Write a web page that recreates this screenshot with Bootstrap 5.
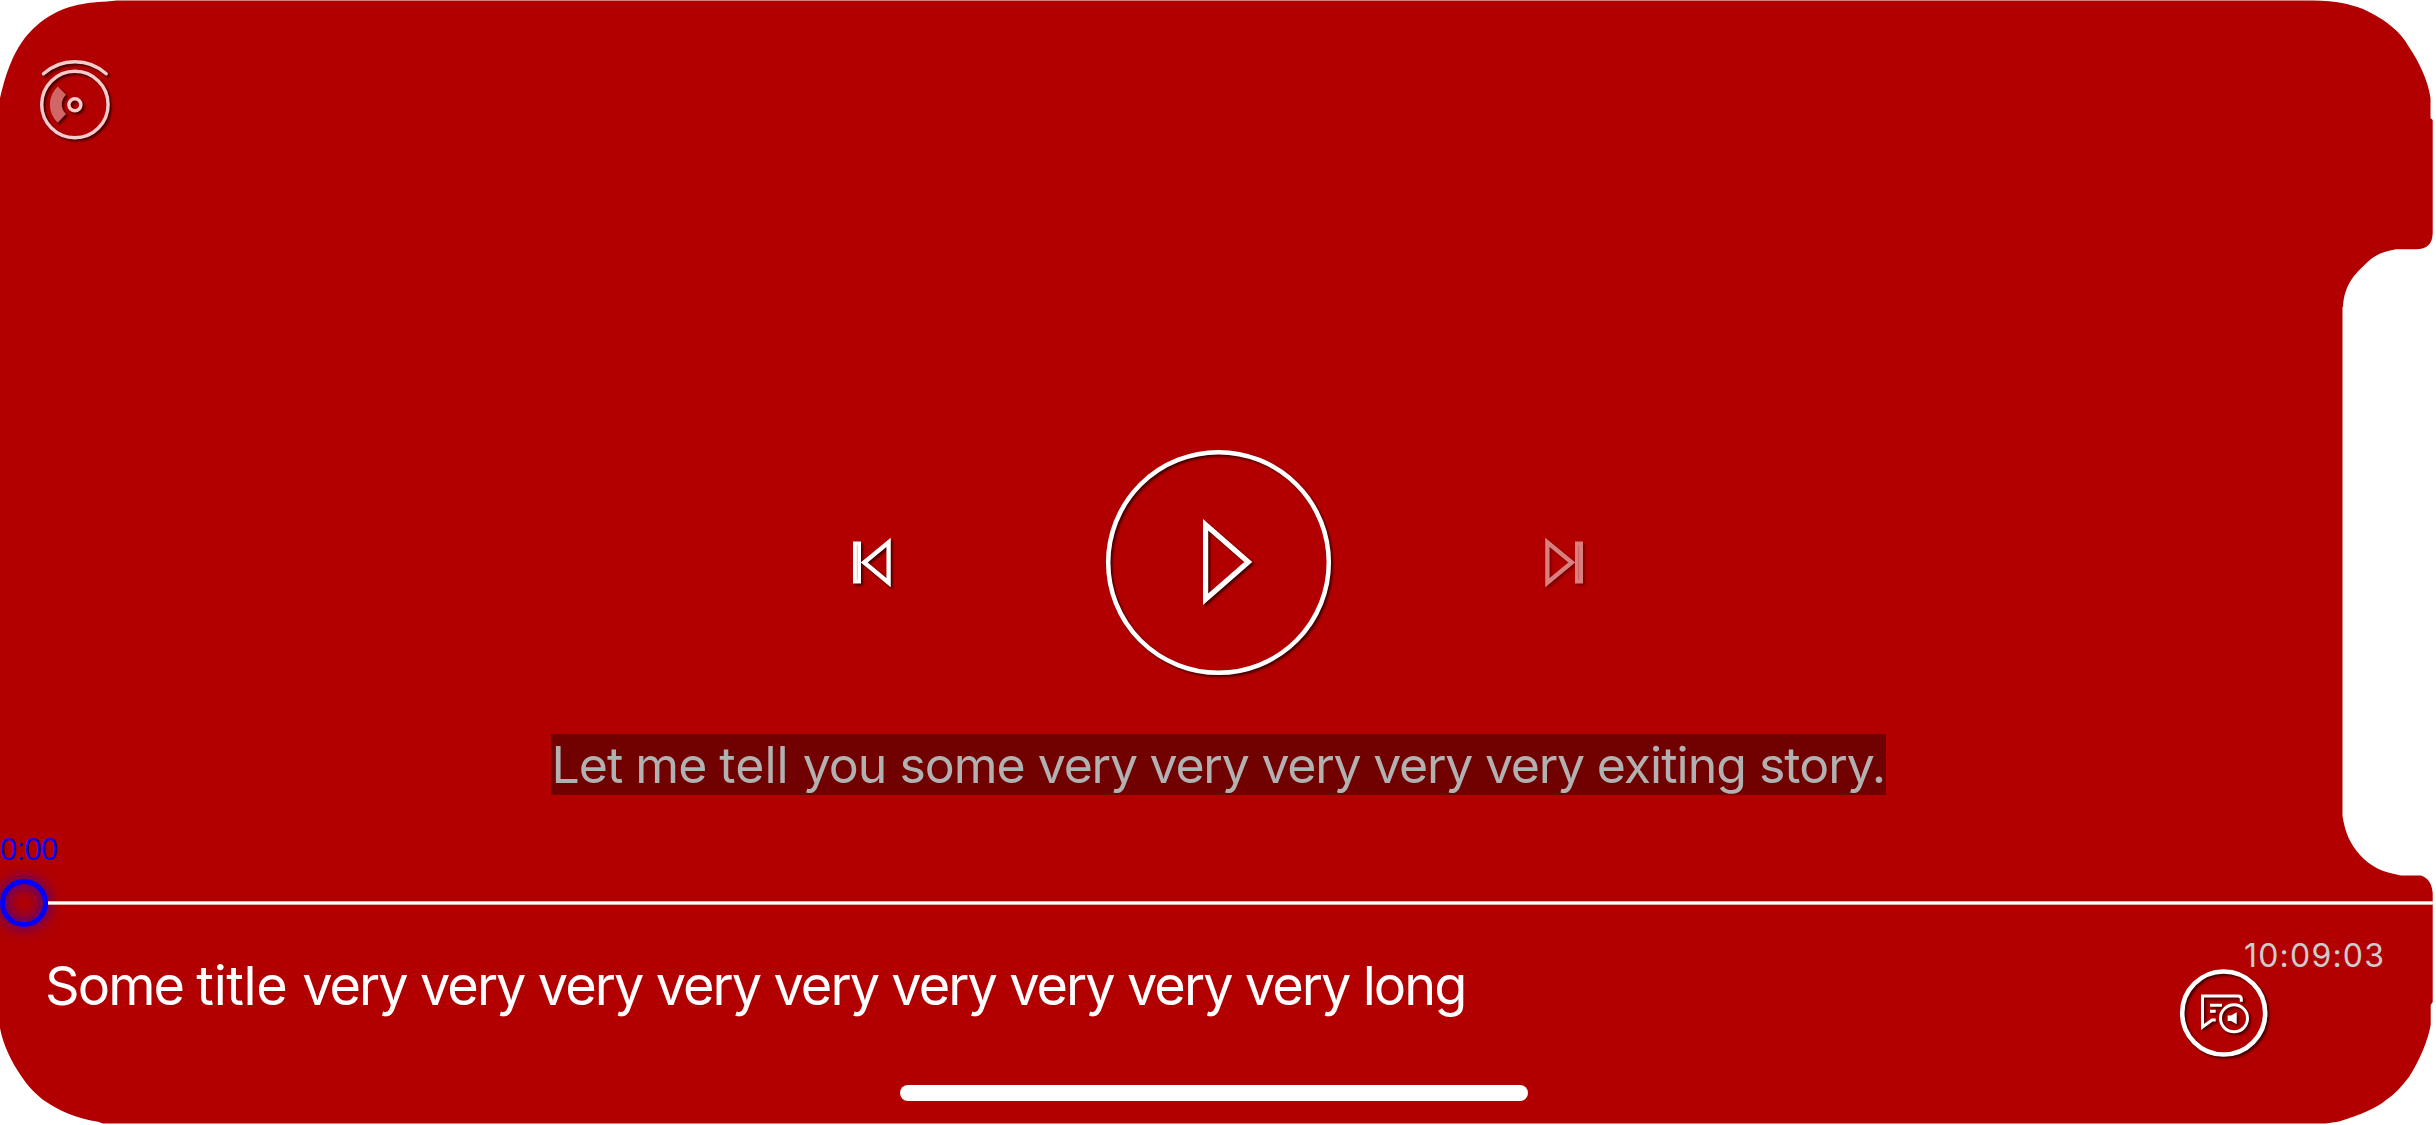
<!DOCTYPE html>
<html lang="en">
<head>
<meta charset="utf-8">
<title>Player</title>
<link href="https://cdn.jsdelivr.net/npm/bootstrap@5.3.0/dist/css/bootstrap.min.css" rel="stylesheet">
<style>
body{background:#fff;font-family:Inter,"Liberation Sans",sans-serif}
.player{width:2436px;height:1125px;color:#fff}
.player svg{display:block;flex:none;overflow:visible}
.shell{left:0;top:0;z-index:0}
.layer{z-index:1}
.soft{filter:drop-shadow(2px 2px 1px rgba(0,0,0,.6))}
.plain{background:none;border:0;padding:0;line-height:1}
.topbar{height:450px;padding:57px 0 0 37px}
.controls{height:225px;padding:0 850px}
.captions{height:61px;margin-top:59px}
.caption-text{width:1335px;height:61px;line-height:62px;padding-left:1px;background:rgba(0,0,0,.365);color:#b1b1b1;font-size:50px;letter-spacing:-1px;white-space:nowrap}
.caption-text .loose{letter-spacing:0}
.caption-text .tight{letter-spacing:-1.250px}
.elapsed{height:84px;padding-top:38px;line-height:32px;font-family:"Liberation Sans",sans-serif;font-size:30.500px;color:#00f;letter-spacing:-.5px}
.seek{height:48px;width:2433px}
.thumb{width:48px;height:48px;border:5px solid #00f;border-radius:50%;box-shadow:0 0 15px rgba(0,0,255,.65),inset 0 0 15px rgba(0,0,255,.65);flex:none}
.track{height:4px;background:#fff;border-top:1px solid #e9aaaa;border-bottom:1px solid #e9aaaa}
.info{height:158px;padding-left:45px}
.title-text{font-size:54px;line-height:64px;margin-top:27px;white-space:nowrap;font-weight:400;letter-spacing:-1.930px}
.title-text .loose{letter-spacing:-.4px}
.side{width:256px}
.clock{font-size:32px;line-height:38px;color:#ccc;letter-spacing:1.200px;margin:10px 0 -6px 64px;white-space:nowrap}
.home{width:628px;height:16px;border-radius:8px;background:#fff;margin-left:900px}
</style>
</head>
<body>
<main class="player position-relative overflow-hidden d-flex flex-column">
<svg class="shell position-absolute" width="2436" height="1125" viewBox="0 0 2436 1125"><path fill="#b20000" d="M0 98C6 72 13 55 22 42C36 22 57 8 83 4C92 2 103 2 117 .5H2313C2337 1 2350 4 2363 9C2374 14 2384 20 2391 26C2400 33 2405 40 2409 47C2419 62 2428 80 2430.500 98V118L2432.700 120V233C2432.500 244 2427 249 2416 249.300H2396C2385 251 2376 255 2371 259C2365 264 2359 270 2354 276C2347 285 2343.500 295 2343 307H2342.500V816C2345 832 2350 844 2360 855C2371 867 2382 872 2401 875.500H2421C2429 878 2432 885 2432.700 893V1002L2430.700 1005V1025C2428 1040 2420 1060 2409 1077C2402 1086 2395 1094 2386 1100C2377 1108 2360 1115 2339 1121.500L2326 1123.500H103L98 1121.700C75 1118 58 1110 46 1101.700C36 1095 28 1086 21.700 1076.700C12 1063 3 1045 0 1028Z"/></svg>

<header class="topbar layer">
<button class="plain" aria-label="Disc"><svg class="soft" width="76" height="84" viewBox="37 58 76 84" fill="none" stroke="#f4cccc" stroke-width="3.400"><path stroke-linecap="round" d="M43.500 74.800A47 47 0 0 1 106.200 74.800"/><circle cx="74.900" cy="105.500" r="33.200"/><circle cx="74.900" cy="105.700" r="6"/><path stroke="none" fill="#d06666" d="M57.700 87.500L66 95.800A13 13 0 0 0 66 115L57.700 123.800A25 25 0 0 1 57.700 87.500Z"/></svg></button>
</header>

<section class="controls layer d-flex justify-content-between align-items-center">
<button class="plain" aria-label="Previous"><svg class="soft" width="44" height="56" viewBox="850 534.500 44 56" fill="none" stroke="#fff" stroke-width="4.300"><path fill="#fff" stroke="none" d="M853 541h8v42h-8z"/><path stroke="#e99" stroke-width=".7" d="M857.300 545v34"/><path d="M864.200 562L888.600 541.800V582.200Z"/></svg></button>
<button class="plain" aria-label="Play"><svg class="soft" width="226" height="225" viewBox="1105 450 226 225" fill="none" stroke="#fff"><circle cx="1218.500" cy="562.500" r="110.300" stroke-width="4.500"/><path stroke-width="5.200" d="M1205.600 524.800L1248.300 562L1205.600 599.200Z"/></svg></button>
<button class="plain" aria-label="Next" disabled><svg class="soft opacity-50" width="44" height="56" viewBox="1542 534.500 44 56" fill="none" stroke="#fff" stroke-width="4.300"><path fill="#fff" stroke="none" d="M1575 541h8v42h-8z"/><path stroke="#e99" stroke-width=".7" d="M1578.700 545v34"/><path d="M1571.800 562L1547.400 541.800V582.200Z"/></svg></button>
</section>

<section class="captions layer d-flex justify-content-center"><div class="caption-text">Let me <span class="loose">tell </span>you some <span class="tight">very very very very very </span>exiting story.</div></section>

<div class="elapsed layer">0:00</div>
<div class="seek layer d-flex align-items-center"><div class="thumb"></div><div class="track flex-grow-1"></div></div>

<footer class="info layer d-flex justify-content-between">
<h1 class="title-text mb-0">Some <span class="loose">title </span>very very very very very very very very very long</h1>
<div class="side d-flex flex-column align-items-start">
<div class="clock">10:09:03</div>
<button class="plain" aria-label="Subtitles and audio"><svg class="soft" width="88" height="88" viewBox="2180 969 88 88" fill="none" stroke="#fff" stroke-width="3"><circle cx="2223.700" cy="1013" r="41.500" stroke-width="4.600"/><path d="M2241.300 1001.700V999Q2241.300 996 2238 996H2202.500V1027L2212 1020H2215.700M2210 1005.200H2222M2210 1011.200H2215.700"/><circle cx="2234" cy="1018.300" r="13.500"/><path fill="#fff" stroke="none" d="M2227.700 1015.500H2231L2236.700 1012.300V1024.300L2231 1021H2227.700Z"/></svg></button>
</div>
</footer>
<div class="home layer"></div>
</main>
<script src="https://cdn.jsdelivr.net/npm/bootstrap@5.3.0/dist/js/bootstrap.bundle.min.js"></script>
</body>
</html>
